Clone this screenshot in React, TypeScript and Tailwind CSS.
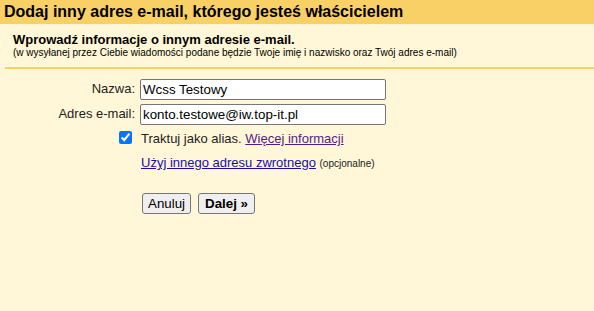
import React from 'react';

const App: React.FC = () => {
  return (
    <div className="w-[594px] h-[311px] bg-[#fff7d7] text-[#222] font-['Liberation_Sans',Arial,sans-serif] overflow-hidden">
      {/* Title bar */}
      <div className="h-6 bg-[#f9d065] px-1 text-[16px] leading-6 font-bold text-black">
        Dodaj inny adres e-mail, którego jesteś właścicielem
      </div>

      {/* Intro */}
      <div className="ml-[5px] pl-2 pt-[8px] pb-[8px] border-b-2 border-[#f9d065]">
        <div className="text-[13px] leading-[15px] font-bold text-black">
          Wprowadź informacje o innym adresie e-mail.
        </div>
        <div className="text-[10px] leading-[12px] text-black">
          (w wysyłanej przez Ciebie wiadomości podane będzie Twoje imię i nazwisko oraz Twój adres e-mail)
        </div>
      </div>

      {/* Form */}
      <div className="pt-[10px] grid grid-cols-[140px_246px] gap-y-[4px] text-[13px] leading-[15px]">
        <label className="pr-[5px] pt-[2px] text-right">Nazwa:</label>
        <input
          className="h-[21px] border border-[#767676] rounded-[2px] bg-white px-[2px] text-[13.333px] text-black outline-none"
          defaultValue="Wcss Testowy"
        />
        <label className="pr-[5px] pt-[2px] text-right">Adres e-mail:</label>
        <input
          className="h-[21px] border border-[#767676] rounded-[2px] bg-white px-[2px] text-[13.333px] text-black outline-none"
          defaultValue="konto.testowe@iw.top-it.pl"
        />

        <div className="flex justify-end pr-[8px] pt-[2px]">
          <input type="checkbox" defaultChecked className="w-[13px] h-[13px] m-0 accent-[#0075ff]" />
        </div>
        <div className="pt-[2px] pl-[1px] whitespace-nowrap">
          Traktuj jako alias.{' '}
          <a href="#" className="text-[#551a8b] underline">Więcej informacji</a>
        </div>

        <div />
        <div className="pt-[5px] pl-[1px] whitespace-nowrap">
          <a href="#" className="text-[#1a0dab] underline">Użyj innego adresu zwrotnego</a>{' '}
          <span className="text-[10px]">(opcjonalne)</span>
        </div>

        <div />
        <div className="pt-[18px] pl-[2px] flex gap-[7px]">
          <button className="h-[21px] px-[5px] bg-[#efefef] border border-[#767676] rounded-[3px] text-[13.333px] text-black">
            Anuluj
          </button>
          <button className="h-[21px] px-[6px] bg-[#efefef] border border-[#767676] rounded-[3px] text-[13.333px] font-bold text-black">
            Dalej »
          </button>
        </div>
      </div>
    </div>
  );
};

export default App;
